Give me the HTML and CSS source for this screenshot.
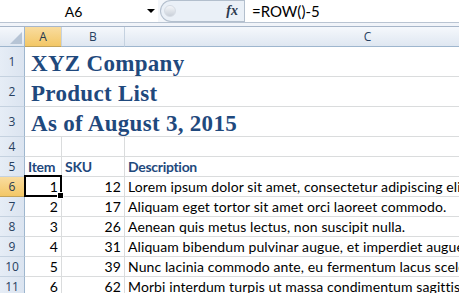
FILE: index.html
```html
<!DOCTYPE html>
<html lang="en">
<head>
  <meta charset="UTF-8">
  <title>Product List</title>
  <link rel="stylesheet" href="styles.css">
</head>
<body>
  <div class="formula-bar">
    <div class="name-box">
      <span class="cell-ref">A6</span>
      <span class="drop-arrow"></span>
    </div>
    <div class="fx-pill">
      <span class="knob"></span>
      <span class="fx">fx</span>
    </div>
    <div class="formula">=ROW()-5</div>
  </div>
  <div class="split-bar"></div>

  <div class="sheet-wrap">
    <table class="sheet">
      <colgroup>
        <col class="col-rh">
        <col class="col-a">
        <col class="col-b">
        <col class="col-c">
      </colgroup>
      <tr class="col-heads">
        <th class="corner"><span class="corner-tri"></span></th>
        <th class="active">A</th>
        <th>B</th>
        <th>C</th>
      </tr>
      <tr class="tall">
        <th class="rh">1</th>
        <td class="title" colspan="3">XYZ Company</td>
      </tr>
      <tr class="tall">
        <th class="rh">2</th>
        <td class="title" colspan="3">Product List</td>
      </tr>
      <tr class="tall">
        <th class="rh">3</th>
        <td class="title" colspan="3">As of August 3, 2015</td>
      </tr>
      <tr>
        <th class="rh">4</th>
        <td></td><td></td><td></td>
      </tr>
      <tr>
        <th class="rh">5</th>
        <td class="head">Item</td>
        <td class="head">SKU</td>
        <td class="head">Description</td>
      </tr>
      <tr>
        <th class="rh active">6</th>
        <td class="num selected">1</td>
        <td class="num">12</td>
        <td>Lorem ipsum dolor sit amet, consectetur adipiscing elit.</td>
      </tr>
      <tr>
        <th class="rh">7</th>
        <td class="num">2</td>
        <td class="num">17</td>
        <td>Aliquam eget tortor sit amet orci laoreet commodo.</td>
      </tr>
      <tr>
        <th class="rh">8</th>
        <td class="num">3</td>
        <td class="num">26</td>
        <td>Aenean quis metus lectus, non suscipit nulla.</td>
      </tr>
      <tr>
        <th class="rh">9</th>
        <td class="num">4</td>
        <td class="num">31</td>
        <td>Aliquam bibendum pulvinar augue, et imperdiet augue.</td>
      </tr>
      <tr>
        <th class="rh">10</th>
        <td class="num">5</td>
        <td class="num">39</td>
        <td>Nunc lacinia commodo ante, eu fermentum lacus scelerisque.</td>
      </tr>
      <tr>
        <th class="rh">11</th>
        <td class="num">6</td>
        <td class="num">62</td>
        <td>Morbi interdum turpis ut massa condimentum sagittis.</td>
      </tr>
    </table>
  </div>
</body>
</html>
```

FILE: styles.css
```css
/* page */
body {
  margin: 0;
  width: 459px;
  height: 293px;
  overflow: hidden;
  background: #ffffff;
  font-family: Lato, "Open Sans", sans-serif;
}

/* formula bar across the top */
.formula-bar {
  display: flex;
  height: 22px;
  border-bottom: 1px solid #b9c4d2;
  background: #f3f6fa;
}
.name-box {
  width: 155px;
  padding-right: 3px;
  display: flex;
  align-items: center;
  background: #ffffff;
  font-size: 14px;
  color: #000;
}
.cell-ref {
  flex: 1;
  text-align: center;
}
.drop-arrow {
  width: 0;
  height: 0;
  border-left: 4px solid transparent;
  border-right: 4px solid transparent;
  border-top: 4px solid #000;
}
.fx-pill {
  width: 84px;
  margin-left: 2px;
  display: flex;
  align-items: center;
  justify-content: space-between;
  background: #eaf0f7;
  border: 1px solid #b3bfcd;
  border-right: none;
  border-radius: 11px 0 0 11px;
  box-sizing: border-box;
  height: 22px;
}
.knob {
  width: 10px;
  height: 10px;
  margin-left: 3px;
  border-radius: 50%;
  background: linear-gradient(#f4f6f9, #c9d0d9);
  border: 1px solid #d6dce4;
}
.fx {
  padding-right: 6px;
  font-family: "Liberation Serif", serif;
  font-style: italic;
  font-weight: bold;
  font-size: 14px;
  color: #2b3a4f;
}
.formula {
  flex: 1;
  display: flex;
  align-items: center;
  padding-left: 7px;
  border-left: 1px solid #b3bfcd;
  background: #ffffff;
  font-size: 15px;
  color: #000;
}
.split-bar {
  height: 3px;
  background: #f1f4f9;
  border-bottom: 1px solid #a7b6c9;
}

/* grid */
.sheet-wrap {
  overflow: hidden;
}
.sheet {
  width: 611px;
  table-layout: fixed;
  border-collapse: separate;
  border-spacing: 0;
}
.col-rh { width: 25px; }
.col-a { width: 37px; }
.col-b { width: 63px; }
.col-c { width: 486px; }

.sheet tr {
  height: 20px;
}
.sheet tr.tall {
  height: 30px;
}
.sheet td {
  padding: 0 3px;
  border-right: 1px solid #dadcdd;
  border-bottom: 1px solid #dadcdd;
  vertical-align: bottom;
  white-space: nowrap;
  overflow: hidden;
  font-size: 14px;
  letter-spacing: 0.1px;
  line-height: 18px;
  color: #000;
}

/* headers */
.sheet th {
  padding: 0;
  font-family: "Open Sans", sans-serif;
  font-weight: normal;
  font-size: 12px;
  color: #27405f;
}
.col-heads th {
  height: 19px;
  background: linear-gradient(#f5f8fc, #dfe7f1);
  border-right: 1px solid #c5d2e0;
  border-bottom: 1px solid #9eb6ce;
  text-align: center;
}
.col-heads th.corner {
  position: relative;
  border-right: 1px solid #9eb6ce;
}
.corner-tri {
  position: absolute;
  right: 2px;
  bottom: 2px;
  width: 0;
  height: 0;
  border-left: 12px solid transparent;
  border-bottom: 12px solid #b6c4d5;
}
.rh {
  background: linear-gradient(90deg, #e6edf6, #dbe4f0);
  border-right: 1px solid #9eb6ce;
  border-bottom: 1px solid #c5d2e0;
  text-align: center;
  vertical-align: middle;
}
.sheet th.active {
  background: linear-gradient(#f9dc9f, #f3c766);
  border-bottom-color: #c2a35a;
  color: #26384f;
}

/* cells */
.sheet td.title {
  padding-left: 6px;
  font-family: "Liberation Serif", serif;
  font-weight: bold;
  font-size: 23px;
  letter-spacing: 0.3px;
  line-height: 25px;
  color: #1f497d;
}
.sheet td.head {
  font-weight: bold;
  letter-spacing: -0.3px;
  color: #1f497d;
}
.sheet td.num {
  text-align: right;
}
.sheet td.selected {
  position: relative;
  overflow: visible;
}
.sheet td.selected::after {
  content: "";
  position: absolute;
  left: -1px;
  top: -2px;
  right: -1px;
  bottom: -1px;
  border: 2px solid #000;
}
.sheet td.selected::before {
  content: "";
  position: absolute;
  right: -3px;
  bottom: -3px;
  width: 5px;
  height: 5px;
  background: #000;
  border: 1px solid #fff;
  z-index: 1;
}
```
